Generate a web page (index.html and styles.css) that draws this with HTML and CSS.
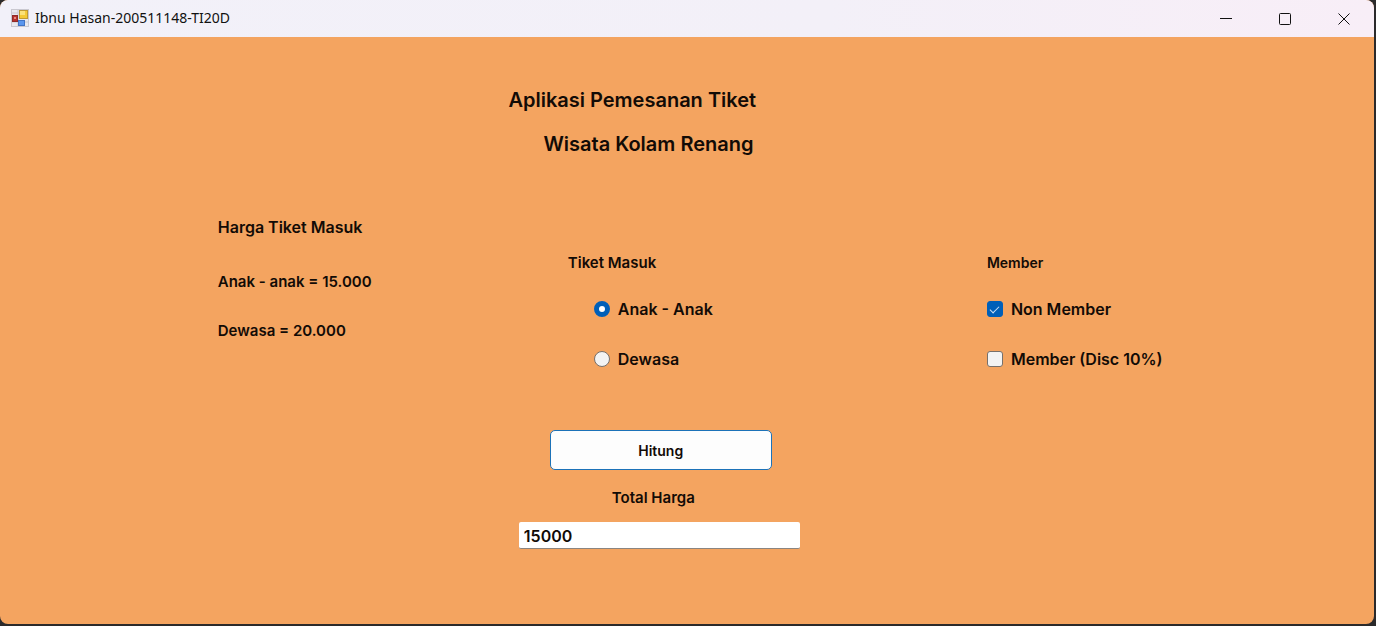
FILE: index.html
```html
<!DOCTYPE html>
<html lang="id">
<head>
<meta charset="utf-8">
<title>Ibnu Hasan-200511148-TI20D</title>
<link rel="stylesheet" href="styles.css">
</head>
<body>
<div class="window">
  <header class="titlebar">
    <svg class="app-icon" viewBox="0 0 18 18" aria-hidden="true">
      <rect x="0.5" y="0.5" width="17" height="17" fill="#e9e8ee" stroke="#c9c8d0"/>
      <path d="M7 1v16M1 4h6M1 13h17" stroke="#c9c8d0" fill="none"/>
      <rect x="1.500" y="6.500" width="5" height="6" fill="#b8322c" stroke="#8f2a28"/>
      <rect x="3" y="8" width="2" height="2" fill="#e88a80"/>
      <rect x="8.500" y="1.500" width="8" height="8" fill="#f4c936" stroke="#c09a34"/>
      <rect x="9" y="2" width="5" height="4" fill="#fbe27a"/>
      <rect x="7.500" y="11.500" width="6" height="5" fill="#5b96ee" stroke="#4273c4"/>
    </svg>
    <h1 class="caption">Ibnu Hasan-200511148-TI20D</h1>
    <div class="controls">
      <button class="control" type="button" aria-label="Minimize"><svg viewBox="0 0 14 14"><path d="M1 7.500h12"/></svg></button>
      <button class="control" type="button" aria-label="Maximize"><svg viewBox="0 0 14 14"><rect x="1.500" y="2.500" width="11" height="11" rx="1"/></svg></button>
      <button class="control" type="button" aria-label="Close"><svg viewBox="0 0 14 14"><path d="M1.500 2.500l11 11M12.500 2.500l-11 11"/></svg></button>
    </div>
  </header>
  <main class="form">
    <h2 class="title"><span>Aplikasi Pemesanan Tiket</span><span class="title-second">Wisata Kolam Renang</span></h2>
    <div class="columns">
      <section class="prices">
        <h3 class="label label-large">Harga Tiket Masuk</h3>
        <p class="label">Anak - anak = 15.000</p>
        <p class="label">Dewasa = 20.000</p>
      </section>
      <section class="order">
        <fieldset class="group tickets">
          <legend class="label">Tiket Masuk</legend>
          <label class="option"><input class="radio" type="radio" name="ticket" checked>Anak - Anak</label>
          <label class="option"><input class="radio" type="radio" name="ticket">Dewasa</label>
        </fieldset>
        <button class="calculate label-small" type="button">Hitung</button>
        <label class="label total-label" for="total">Total Harga</label>
        <input class="total" id="total" type="text" value="15000">
      </section>
      <fieldset class="group member">
        <legend class="label label-small">Member</legend>
        <label class="option"><input class="check" type="checkbox" checked>Non Member</label>
        <label class="option"><input class="check" type="checkbox">Member (Disc 10%)</label>
      </fieldset>
    </div>
  </main>
</div>
</body>
</html>
```
FILE: styles.css
```css
* { box-sizing: border-box; }
body {
  margin: 0;
  min-height: 100vh;
  display: flex;
  padding: 0 2px 2px 0;
  background: #2b2a2b;
  color: #120b06;
  font: 600 15px/20px Inter, sans-serif;
}
h1, h2, h3, p { margin: 0; font: inherit; }
.window {
  flex: 1;
  display: flex;
  flex-direction: column;
  border-radius: 8px;
  overflow: hidden;
  background: #f4a460;
}
.titlebar {
  display: flex;
  align-items: center;
  height: 37px;
  padding: 0 1px 2px 11px;
  gap: 6px;
  background: linear-gradient(90deg, #f2f1f9, #f3f0f8 60%, #f8eef7);
}
.app-icon { width: 18px; height: 18px; }
.caption { font: 400 14px/20px "Noto Sans", sans-serif; color: #111; }
.controls { display: flex; margin-left: auto; height: 100%; }
.control {
  display: grid;
  place-items: center;
  width: 59px;
  padding: 0;
  border: 0;
  background: none;
}
.control svg { width: 14px; height: 14px; fill: none; stroke: #111; }
.form { flex: 1; padding-top: 41px; }
.title {
  display: flex;
  flex-direction: column;
  padding-left: 37%;
  font-size: 20px;
  line-height: 44px;
}
.title-second { padding-left: 35px; }
.columns {
  display: grid;
  grid-template-columns: 301fr 468fr 387fr;
  padding: 51px 0 24px 15.85%;
  align-items: start;
}
.label { font-size: 15px; line-height: 20px; }
.label-large { font-size: 16px; }
.label-small { font-size: 14px; }
.prices { display: grid; gap: 29px; }
.prices .label-large { margin-bottom: 6px; }
.order { display: flex; flex-direction: column; padding-top: 36px; width: 60%; }
.group { margin: 0; padding: 0; border: 0; min-width: 0; }
.group .label { padding: 0; }
.option {
  display: flex;
  align-items: center;
  gap: 8px;
  width: max-content;
  font-size: 16px;
  line-height: 20px;
  margin-top: 30px;
}
.group .label + .option { margin-top: 26px; }
.tickets { padding-left: 49px; }
.tickets .option { padding-left: 26px; }
.member { margin-top: 36px; }
.radio, .check {
  appearance: none;
  width: 16px;
  height: 16px;
  margin: 0;
  border: 1px solid #77706b;
  background: #f3f3f3;
}
.radio { border-radius: 50%; }
.check { display: grid; place-items: center; border-radius: 3px; }
.radio:checked { border: 5px solid #005fb8; background: #fff; }
.check:checked { border-color: #005fb8; background: #005fb8; }
.check:checked::after {
  content: "";
  width: 8px;
  height: 4px;
  margin-bottom: 2px;
  border: solid #cfe2f4;
  border-width: 0 0 1px 1px;
  transform: rotate(-45deg);
}
.calculate {
  height: 40px;
  margin: 61px 28px 0 31px;
  border: 1px solid #1c72b8;
  border-radius: 5px;
  background: #fdfdfd;
  color: inherit;
  font-family: inherit;
  font-weight: inherit;
}
.total-label { margin: 18px 0 14px 93px; }
.total {
  width: 100%;
  height: 27px;
  padding: 2px 5px 0;
  border: 0;
  border-bottom: 1px solid #8b8580;
  border-radius: 2px;
  background: #fff;
  color: inherit;
  font: 600 16px/20px Inter, sans-serif;
}
```
